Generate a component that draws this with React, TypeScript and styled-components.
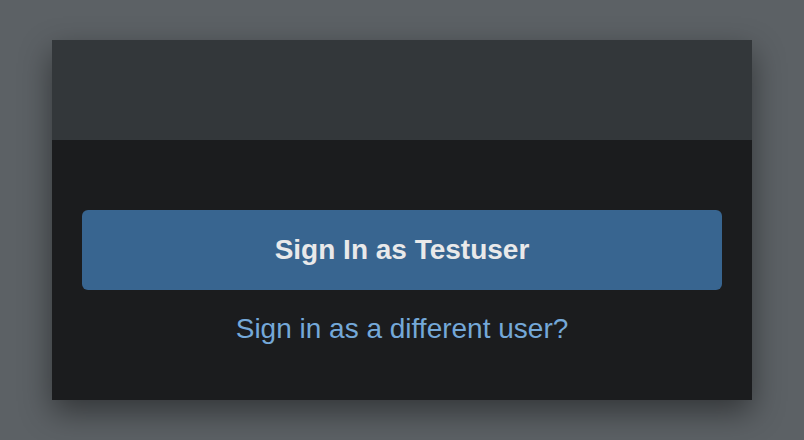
import React from "react";
import styled, { createGlobalStyle } from "styled-components";

const Global = createGlobalStyle`
  html, body { margin: 0; padding: 0; }
  body {
    width: 804px;
    height: 440px;
    background: #5c6165;
    font-family: "Liberation Sans", Arial, sans-serif;
    overflow: hidden;
  }
`;

const Page = styled.div`
  display: flex;
  justify-content: center;
  padding-top: 40px;
`;

const Card = styled.div`
  width: 700px;
  height: 360px;
  display: flex;
  flex-direction: column;
  background: #1b1c1e;
  box-shadow: 0 12px 30px rgba(0, 0, 0, 0.45);
`;

const Header = styled.div`
  height: 100px;
  background: #33373a;
`;

const Body = styled.div`
  display: flex;
  flex-direction: column;
  align-items: center;
  padding: 70px 30px 0;
`;

const PrimaryButton = styled.button`
  width: 100%;
  height: 80px;
  border: none;
  border-radius: 6px;
  background: #386590;
  color: #e9e9ea;
  font-family: "Liberation Sans", Arial, sans-serif;
  font-weight: bold;
  font-size: 28px;
  cursor: pointer;
`;

const Link = styled.a`
  margin-top: 23px;
  color: #74a8d8;
  font-size: 28px;
  line-height: 32px;
  text-decoration: none;
  cursor: pointer;
`;

export default function App() {
  return (
    <>
      <Global />
      <Page>
        <Card>
          <Header />
          <Body>
            <PrimaryButton>Sign In as Testuser</PrimaryButton>
            <Link>Sign in as a different user?</Link>
          </Body>
        </Card>
      </Page>
    </>
  );
}
